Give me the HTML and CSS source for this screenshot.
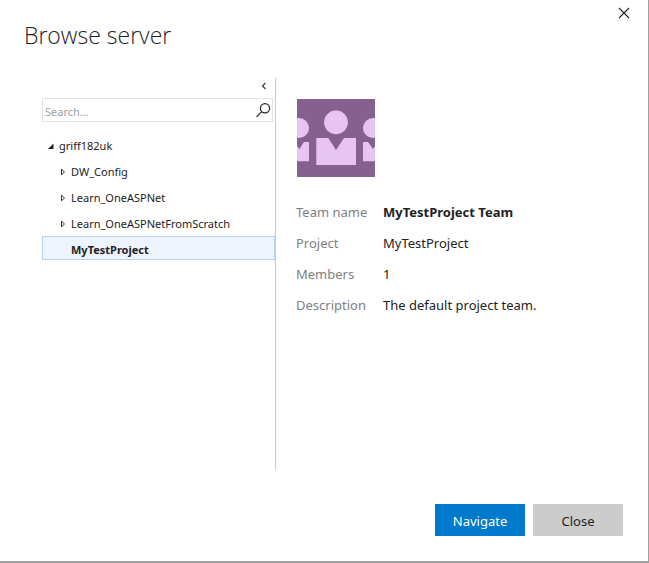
FILE: index.html
```html
<!DOCTYPE html>
<html lang="en">
<head>
<meta charset="utf-8">
<title>Browse server</title>
<link rel="stylesheet" href="styles.css">
</head>
<body>
<div class="dialog" role="dialog" aria-labelledby="dialog-title">
  <header class="dialog-header">
    <h1 class="dialog-title" id="dialog-title">Browse server</h1>
    <button class="icon-button dismiss" type="button" aria-label="Dismiss">
      <svg width="12" height="12" viewBox="0 0 12 12"><path d="M1 1l10 10M11 1L1 11" fill="none" stroke="#222" stroke-width="1.1"/></svg>
    </button>
  </header>

  <main class="dialog-body">
    <nav class="browser" aria-label="Projects">
      <button class="icon-button collapse" type="button" aria-label="Collapse">
        <svg width="6" height="8" viewBox="0 0 6 8"><path d="M4.5 1L1.5 4l3 3" fill="none" stroke="#444" stroke-width="1.3"/></svg>
      </button>
      <div class="search">
        <input class="search-input" type="text" placeholder="Search..." aria-label="Search">
        <button class="icon-button" type="button" aria-label="Start search">
          <svg width="16" height="16" viewBox="0 0 16 16"><g fill="none" stroke="#222" stroke-width="1.2"><circle cx="10" cy="6.300" r="4.600"/><path d="M6.700 9.600L1.500 14.800"/></g></svg>
        </button>
      </div>
      <ul class="tree">
        <li>
          <button class="node" type="button" aria-expanded="true">
            <svg class="twisty" width="8" height="8" viewBox="0 0 8 8"><path d="M6.500 1.500v5.500H1z" fill="#222"/></svg>griff182uk
          </button>
          <ul class="tree-children">
            <li><button class="node" type="button" aria-expanded="false"><svg class="twisty" width="8" height="8" viewBox="0 0 8 8"><path d="M2.500 1.200v5.600L5.500 4z" fill="none" stroke="#333"/></svg>DW_Config</button></li>
            <li><button class="node" type="button" aria-expanded="false"><svg class="twisty" width="8" height="8" viewBox="0 0 8 8"><path d="M2.500 1.200v5.600L5.500 4z" fill="none" stroke="#333"/></svg>Learn_OneASPNet</button></li>
            <li><button class="node" type="button" aria-expanded="false"><svg class="twisty" width="8" height="8" viewBox="0 0 8 8"><path d="M2.500 1.200v5.600L5.500 4z" fill="none" stroke="#333"/></svg>Learn_OneASPNetFromScratch</button></li>
            <li><button class="node selected" type="button" aria-current="true"><span class="twisty"></span>MyTestProject</button></li>
          </ul>
        </li>
      </ul>
    </nav>

    <section class="details" aria-label="Team details">
      <svg class="avatar" width="78" height="78" viewBox="0 0 78 78" role="img" aria-label="Team">
        <path d="M0 0h78v78H0z" fill="#86608e"/>
        <g fill="#e8c4f2">
          <circle cx="39" cy="23.300" r="11.900"/>
          <path d="M19.300 38.900h12L39 51l8-12.100h12V66H19.300z"/>
          <circle cx="2" cy="29" r="10"/>
          <path d="M0 47l2.500 3L7 43h5v19.300H0z"/>
          <circle cx="76" cy="29" r="10"/>
          <path d="M78 47.500l-2 2.500-5-7h-5v19.300h12z"/>
        </g>
      </svg>
      <dl class="facts">
        <dt>Team name</dt><dd class="strong">MyTestProject Team</dd>
        <dt>Project</dt><dd>MyTestProject</dd>
        <dt>Members</dt><dd>1</dd>
        <dt>Description</dt><dd>The default project team.</dd>
      </dl>
    </section>
  </main>

  <footer class="dialog-footer">
    <button class="button primary" type="button">Navigate</button>
    <button class="button" type="button">Close</button>
  </footer>
</div>
</body>
</html>
```
FILE: styles.css
```css
* {
  box-sizing: border-box;
}

body {
  margin: 0;
  background: #fff;
  color: #222;
  font: 11px/24px "Segoe UI", "Noto Sans", "Open Sans", sans-serif;
}

button,
input {
  font: inherit;
  color: inherit;
}

.dialog {
  display: flex;
  flex-direction: column;
  min-height: 100vh;
  border-right: 1px solid #a0a0a0;
  border-bottom: 2px solid #a0a0a0;
}

.dialog-header {
  display: flex;
  justify-content: space-between;
  align-items: flex-start;
  padding: 6px 17px 0 24px;
}

.dialog-title {
  margin: 12px 0 0;
  font-family: "Segoe UI Light", "Open Sans", sans-serif;
  font-size: 23px;
  font-weight: 300;
  line-height: 34px;
}

.icon-button {
  display: flex;
  padding: 0;
  border: 0;
  background: none;
}

.dismiss {
  padding: 1px;
}

.dialog-body {
  display: flex;
  flex: 1;
  margin: 26px 24px 0 42px;
}

.browser {
  display: flex;
  flex-direction: column;
  flex: 0 0 234px;
  border-right: 1px solid #c8c8c8;
}

.collapse {
  align-self: flex-end;
  height: 20px;
  padding: 4px 8px;
}

.search {
  display: flex;
  align-items: center;
  height: 24px;
  margin-right: 2px;
  padding-right: 1px;
  border: 1px solid #e2e2e2;
}

.search-input {
  flex: 1;
  min-width: 0;
  height: 22px;
  padding: 4px 2px 0;
  border: 0;
  outline: 0;
  background: none;
}

.search-input::placeholder {
  color: #a0a0a0;
  opacity: 1;
}

.tree,
.tree-children {
  display: grid;
  gap: 2px;
  margin: 0;
  padding: 0;
  list-style: none;
}

.tree {
  margin-top: 10px;
}

.tree-children {
  margin-top: 2px;
}

.node {
  display: flex;
  align-items: center;
  gap: 4px;
  width: 100%;
  height: 24px;
  padding: 4px 4px 0;
  border: 1px solid transparent;
  background: none;
  text-align: left;
}

.tree-children .node {
  padding-left: 16px;
}

.twisty {
  width: 8px;
}

.node.selected {
  border-color: #b5d4f5;
  background: #edf4fe;
  font-weight: 700;
}

.details {
  flex: 1;
  padding: 21px 0 0 20px;
}

.avatar {
  display: block;
  margin-left: 1px;
}

.facts {
  display: grid;
  grid-template-columns: 75px 1fr;
  gap: 7px 12px;
  margin: 23px 0 0;
  font-size: 13px;
}

.facts dt {
  color: #808080;
}

.facts dd {
  margin: 0;
}

.facts .strong {
  font-weight: 700;
}

.dialog-footer {
  display: flex;
  justify-content: flex-end;
  gap: 8px;
  padding: 34px 25px 25px;
}

.button {
  width: 90px;
  height: 32px;
  padding: 2px 0 0;
  border: 0;
  background: #ccc;
  font-size: 13px;
}

.button.primary {
  background: #007acc;
  color: #fff;
}
```
